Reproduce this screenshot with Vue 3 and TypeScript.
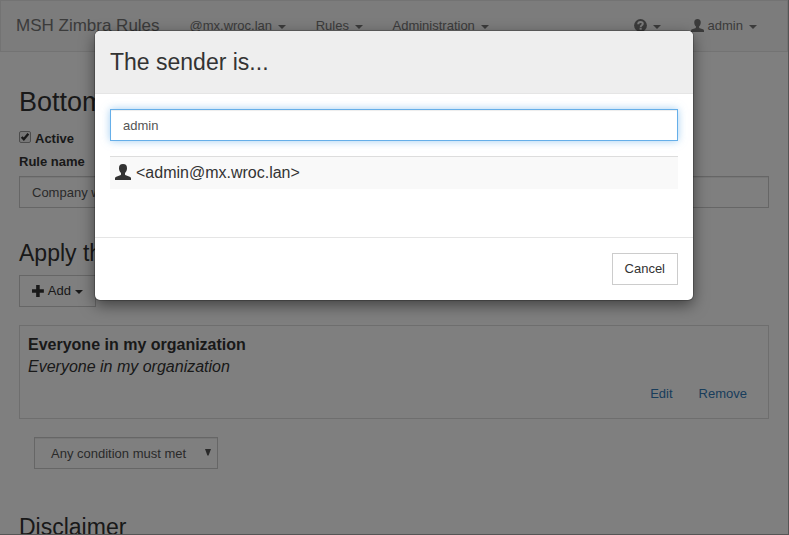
<script setup lang="ts">
import { ref } from 'vue'

interface Menu {
  label: string
}

const menus: Menu[] = [{ label: '@mx.wroc.lan' }, { label: 'Rules' }, { label: 'Administration' }]
const results: string[] = ['<admin@mx.wroc.lan>']
const query = ref('admin')
const ruleName = ref('Company w')
const active = ref(true)
const userPath =
  'M8 0C5.2 0 3.9 1.6 4 4.2C4 6.2 4.8 7.9 6 9V10.4C6 10.9 5.7 11.1 5.2 11.3L1.3 12.7C.4 13.1 0 13.7 0 14.6V16H16V14.6C16 13.7 15.6 13.1 14.7 12.7L10.8 11.3C10.3 11.1 10 10.9 10 10.4V9C11.2 7.9 12 6.2 12 4.2C12.1 1.6 10.8 0 8 0Z'
</script>

<template>
  <div class="page">
    <nav class="navbar">
      <span class="brand">MSH Zimbra Rules</span>
      <a v-for="m in menus" :key="m.label" class="nav-item">{{ m.label }}<i class="caret"></i></a>
      <div class="nav-right">
        <a class="nav-item help">
          <svg class="icon-help" viewBox="0 0 13 13">
            <circle cx="6.5" cy="6.5" r="6.4" fill="currentColor" />
            <path class="help-mark" d="M4.2 5.2C4.2 3.6 5.1 3 6.5 3S8.8 3.7 8.8 4.8C8.8 6.3 6.7 6.2 6.7 8" />
            <path class="help-dot" d="M5.6 8.7h2.1v2h-2.1z" />
          </svg><i class="caret"></i>
        </a>
        <a class="nav-item user">
          <svg class="icon-user" viewBox="0 0 16 16"><path :d="userPath" fill="currentColor" /></svg>admin<i class="caret"></i>
        </a>
      </div>
    </nav>

    <main class="content">
      <h2>Bottom</h2>
      <label class="check">
        <span class="box">
          <svg v-if="active" viewBox="0 0 12 12"><path d="M2 6L4.6 8.8L10 2" /></svg>
        </span>Active
      </label>
      <label class="field-label">Rule name</label>
      <input v-model="ruleName" class="form-control" />
      <h3 class="apply">Apply th</h3>
      <button class="btn add">
        <svg viewBox="0 0 12 12"><path d="M4.2 0h3.6v4.2H12v3.6H7.8V12H4.2V7.8H0V4.2h4.2z" fill="currentColor" /></svg>
        Add<i class="caret"></i>
      </button>
      <section class="rule">
        <strong>Everyone in my organization</strong>
        <em>Everyone in my organization</em>
        <div class="actions"><a>Edit</a><a>Remove</a></div>
      </section>
      <div class="form-control select">
        <span>Any condition must met</span>
        <svg viewBox="0 0 6 7"><path d="M0 0H6L3.6 6.5H2.4Z" fill="currentColor" /></svg>
      </div>
      <h3 class="disclaimer">Disclaimer</h3>
    </main>

    <div class="backdrop">
      <div class="modal">
        <header>The sender is...</header>
        <div class="modal-body">
          <input v-model="query" class="form-control focused" />
          <div v-for="r in results" :key="r" class="result">
            <svg viewBox="0 0 16 16"><path :d="userPath" fill="currentColor" /></svg>
            <span>{{ r }}</span>
          </div>
        </div>
        <footer><button class="btn">Cancel</button></footer>
      </div>
    </div>
  </div>
</template>

<style>
body {
  overflow: hidden;
}
</style>

<style scoped>
* {
  box-sizing: border-box;
}
.page {
  position: relative;
  width: 789px;
  height: 535px;
  overflow: hidden;
  background: #fff;
  border: solid #555;
  border-width: 0 1px 1px 0;
  font: 13px/18px 'Liberation Sans', Arial, sans-serif;
  color: #333;
}
.navbar {
  display: flex;
  align-items: center;
  height: 52px;
  padding: 0 15px;
  background: #f8f8f8;
  border: 1px solid #e7e7e7;
  color: #777;
}
.brand {
  width: 173.5px;
  font-size: 17px;
}
.nav-item {
  display: flex;
  align-items: center;
  margin-right: 29.6px;
}
.caret {
  width: 0;
  height: 0;
  margin: 2px 0 0 6px;
  border: 4px solid transparent;
  border-top-color: currentColor;
  border-bottom: 0;
}
.nav-right {
  display: flex;
  margin-left: auto;
}
.nav-right .nav-item:last-child {
  margin-right: 15px;
}
.icon-help {
  width: 13px;
  height: 13px;
  margin-top: -2px;
}
.help-mark {
  fill: none;
  stroke: #f8f8f8;
  stroke-width: 1.9;
}
.help-dot {
  fill: #f8f8f8;
}
.icon-user {
  width: 13px;
  height: 13px;
  margin: -2px 4px 0 0;
}
.content {
  display: flex;
  flex-direction: column;
  padding: 32px 19px 0;
}
h2,
h3 {
  margin: 0;
  font-weight: 400;
}
h2 {
  font-size: 27px;
  line-height: 36px;
}
h3 {
  font-size: 23px;
  line-height: 28px;
}
.check {
  display: flex;
  align-items: center;
  height: 18px;
  margin-top: 10px;
  font-weight: 700;
}
.box {
  width: 12px;
  height: 12px;
  margin: -5px 4px 0 0;
  border: 1px solid #999;
  border-radius: 2px;
  background: #eee;
}
.box svg {
  display: block;
  width: 10px;
  height: 10px;
}
.box path {
  fill: none;
  stroke: #333;
  stroke-width: 2.8;
}
.field-label {
  margin-top: 5px;
  font-weight: 700;
}
.form-control {
  display: block;
  width: 100%;
  height: 32px;
  padding: 6px 12px;
  border: 1px solid #ccc;
  background: #fff;
  box-shadow: inset 0 1px 1px rgba(0, 0, 0, 0.075);
  font: inherit;
  color: #555;
  outline: 0;
}
.content > input {
  margin-top: 5px;
}
.apply {
  margin-top: 31px;
}
.btn {
  height: 32px;
  padding: 0 12px;
  border: 1px solid #ccc;
  background: #fff;
  font: inherit;
  color: #333;
}
.add {
  display: flex;
  align-items: center;
  align-self: flex-start;
  width: 77px;
  margin-top: 8px;
}
.add svg {
  width: 12px;
  height: 12px;
  margin: -1px 4px 0 0;
}
.add .caret {
  margin-left: 4px;
}
.rule {
  display: flex;
  flex-direction: column;
  height: 94px;
  margin-top: 18px;
  padding: 8px;
  border: 1px solid #ddd;
  font-size: 16px;
  line-height: 22px;
}
.actions {
  display: flex;
  justify-content: flex-end;
  gap: 26px;
  margin-top: 7px;
  padding-right: 13px;
  font-size: 13px;
  line-height: 18px;
  color: #337ab7;
}
.select {
  display: flex;
  justify-content: space-between;
  width: 184px;
  margin: 18px 0 0 15px;
  padding: 7px 6px 5px 16px;
}
.select svg {
  width: 6px;
  height: 7px;
  margin-top: 4px;
}
.disclaimer {
  margin-top: 44px;
}
.backdrop {
  position: absolute;
  inset: 0;
  display: flex;
  align-items: flex-start;
  padding: 31px 0 0 95px;
  background: rgba(0, 0, 0, 0.5);
}
.modal {
  width: 598px;
  height: 269px;
  overflow: hidden;
  border-radius: 5px;
  background: #fff;
  box-shadow: 0 0 0 1px rgba(0, 0, 0, 0.2), 0 5px 15px rgba(0, 0, 0, 0.5);
}
header {
  height: 63px;
  padding: 0 15px;
  border-bottom: 1px solid #e5e5e5;
  background: #eee;
  font-size: 23px;
  line-height: 62px;
}
.modal-body {
  height: 143px;
  padding: 15px;
}
.focused {
  border-color: #66afe9;
  box-shadow: inset 0 1px 1px rgba(0, 0, 0, 0.075), 0 0 8px rgba(102, 175, 233, 0.6);
}
.result {
  display: flex;
  align-items: center;
  height: 33px;
  margin-top: 15px;
  padding-left: 5px;
  border-top: 1px solid #ddd;
  background: #f9f9f9;
  font-size: 16px;
}
.result svg {
  width: 16px;
  height: 16px;
  margin: -3px 5px 0 0;
}
footer {
  display: flex;
  justify-content: flex-end;
  padding: 15px;
  border-top: 1px solid #e5e5e5;
}
</style>
